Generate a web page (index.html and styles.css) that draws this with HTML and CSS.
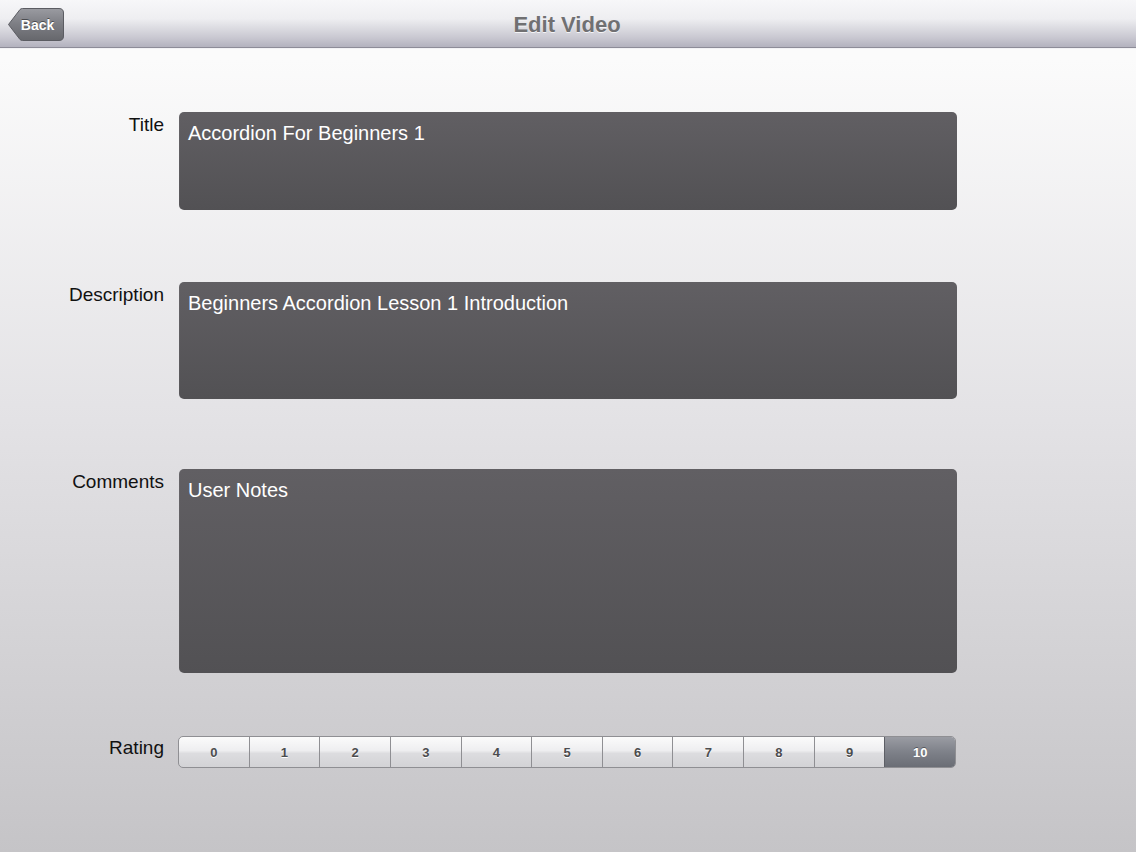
FILE: index.html
```html
<!DOCTYPE html>
<html>
<head>
<meta charset="utf-8">
<link rel="stylesheet" href="styles.css">
</head>
<body>
<div class="screen">
  <header class="navbar">
    <div class="back">
      <svg class="back-shape" width="56" height="33" viewBox="0 0 56 33">
        <defs>
          <linearGradient id="bg" x1="0" y1="0" x2="0" y2="1">
            <stop offset="0" stop-color="#9a9ba1"/>
            <stop offset="0.5" stop-color="#7c7d83"/>
            <stop offset="1" stop-color="#66676c"/>
          </linearGradient>
        </defs>
        <path d="M0.5 16.5 L12 1.5 Q13 0.5 14.5 0.5 L51 0.5 Q55.5 0.5 55.5 5 L55.5 28 Q55.5 32.5 51 32.5 L14.5 32.5 Q13 32.5 12 31.5 Z" fill="url(#bg)" stroke="#5b5c62" stroke-width="1"/>
      </svg>
      <span class="back-label">Back</span>
    </div>
    <h1 class="nav-title">Edit Video</h1>
  </header>
  <main class="form">
    <div class="row row-title">
      <label class="label">Title</label>
      <div class="field">Accordion For Beginners 1</div>
    </div>
    <div class="row row-desc">
      <label class="label">Description</label>
      <div class="field">Beginners Accordion Lesson 1 Introduction</div>
    </div>
    <div class="row row-comments">
      <label class="label">Comments</label>
      <div class="field">User Notes</div>
    </div>
    <div class="row row-rating">
      <label class="label">Rating</label>
      <div class="segmented">
        <div class="seg">0</div>
        <div class="seg">1</div>
        <div class="seg">2</div>
        <div class="seg">3</div>
        <div class="seg">4</div>
        <div class="seg">5</div>
        <div class="seg">6</div>
        <div class="seg">7</div>
        <div class="seg">8</div>
        <div class="seg">9</div>
        <div class="seg selected">10</div>
      </div>
    </div>
  </main>
</div>
</body>
</html>
```
FILE: styles.css
```css
html, body {
  margin: 0;
  padding: 0;
}
body {
  font-family: "Liberation Sans", Arial, sans-serif;
}
.screen {
  width: 1136px;
  height: 852px;
  overflow: hidden;
  background: linear-gradient(to bottom, #fbfbfb 0px, #fbfbfb 60px, #e3e2e5 420px, #c5c4c7 852px);
}
.navbar {
  height: 47px;
  border-bottom: 1px solid #8d8c98;
  background: linear-gradient(to bottom, #f7f7f9 0%, #eeeef1 40%, #e0e0e5 55%, #c9c8d1 80%, #b3b2be 100%);
  display: flex;
  align-items: center;
  justify-content: center;
  position: relative;
  box-shadow: 0 1px 0 #f2f2f4;
}
.back {
  position: absolute;
  left: 8px;
  top: 8px;
  width: 56px;
  height: 33px;
}
.back-shape {
  position: absolute;
  left: 0;
  top: 0;
}
.back-label {
  position: absolute;
  left: 3px;
  right: 0;
  top: 0;
  bottom: 0;
  display: flex;
  align-items: center;
  justify-content: center;
  color: #fff;
  font-weight: bold;
  font-size: 14px;
  text-shadow: 0 -1px 0 #4a4b50;
}
.nav-title {
  margin: 0;
  font-size: 22px;
  font-weight: bold;
  color: #707072;
  text-shadow: 0 1px 0 #f4f4f6;
  position: relative;
  left: -1px;
  top: 1px;
}
.form {
  display: flex;
  flex-direction: column;
  padding-top: 64px;
}
.row {
  display: flex;
  column-gap: 15px;
}
.label {
  width: 164px;
  flex: none;
  text-align: right;
  font-size: 19px;
  line-height: 22px;
  color: #111;
  padding-top: 2px;
}
.field {
  width: 761px;
  flex: none;
  background: linear-gradient(to bottom, #615f63, #525154);
  border-radius: 5px;
  color: #fff;
  font-size: 20px;
  line-height: 23px;
  padding: 10px 8px 0 9px;
  box-sizing: content-box;
  box-shadow: inset 1px 0 0 rgba(255,255,255,0.04);
}
.row-title .field { height: 88px; }
.row-desc { margin-top: 72px; }
.row-desc .field { height: 107px; }
.row-comments { margin-top: 70px; }
.row-comments .field { height: 194px; }
.row-rating { margin-top: 63px; column-gap: 14px; }
.row-rating .label { padding-top: 1px; }
.segmented {
  width: 776px;
  height: 30px;
  display: flex;
  border: 1px solid #8f8f93;
  border-radius: 5px;
  overflow: hidden;
  background: linear-gradient(to bottom, #fbfbfb 0%, #eeeef0 45%, #dcdcdf 55%, #d3d3d6 100%);
}
.seg {
  flex: 1;
  display: flex;
  align-items: center;
  justify-content: center;
  font-size: 13px;
  font-weight: bold;
  color: #4c4c4e;
  border-left: 1px solid #8f8f93;
  text-shadow: 0 1px 0 #fff;
}
.seg:first-child { border-left: none; }
.seg.selected {
  background: linear-gradient(to bottom, #9a9ca3 0%, #7e8189 50%, #6a6d75 100%);
  color: #fff;
  text-shadow: 0 -1px 0 #55575d;
  border-left-color: #5d5f66;
}
```
